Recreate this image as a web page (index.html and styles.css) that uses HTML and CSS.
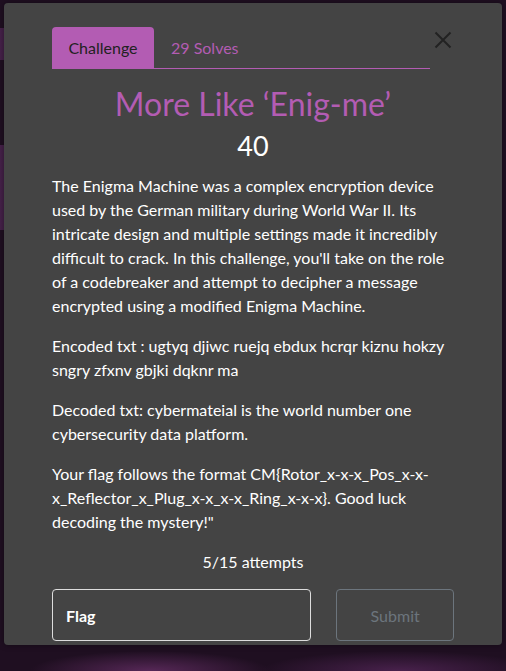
FILE: index.html
```html
<!DOCTYPE html>
<html lang="en">
<head>
<meta charset="utf-8">
<link rel="stylesheet" href="styles.css">
</head>
<body>
<div class="backdrop">
  <div class="modal">
    <div class="modal-head">
      <ul class="tabs">
        <li class="tab active">Challenge</li>
        <li class="tab">29 Solves</li>
      </ul>
      <button class="close" aria-label="Close">
        <svg width="18" height="18" viewBox="0 0 18 18"><path d="M1.5 1.5 L16.5 16.5 M16.5 1.5 L1.5 16.5" stroke="#222" stroke-width="2" fill="none"/></svg>
      </button>
    </div>
    <h2 class="title">More Like ‘Enig-me’</h2>
    <div class="points">40</div>
    <div class="desc">
      <p>The Enigma Machine was a complex encryption device used by the German military during World War II. Its intricate design and multiple settings made it incredibly difficult to crack. In this challenge, you'll take on the role of a codebreaker and attempt to decipher a message encrypted using a modified Enigma Machine.</p>
      <p>Encoded txt : ugtyq djiwc ruejq ebdux hcrqr kiznu hokzy sngry zfxnv gbjki dqknr ma</p>
      <p>Decoded txt: cybermateial is the world number one cybersecurity data platform.</p>
      <p>Your flag follows the format CM{Rotor_x-x-x_Pos_x-x-x_Reflector_x_Plug_x-x_x-x_Ring_x-x-x}. Good luck decoding the mystery!"</p>
    </div>
    <div class="attempts">5/15 attempts</div>
    <form class="flag-form">
      <input class="flag-input" type="text" placeholder="Flag">
      <button class="submit" type="button">Submit</button>
    </form>
  </div>
</div>
</body>
</html>
```
FILE: styles.css
```css
* { box-sizing: border-box; }
html, body { margin: 0; padding: 0; }
body {
  width: 506px;
  height: 671px;
  overflow: hidden;
  font-family: Lato, "Open Sans", sans-serif;
  background:
    linear-gradient(180deg, transparent 0px, transparent 28px, rgba(95,45,100,0.6) 28px, rgba(95,45,100,0.6) 60px, transparent 60px, transparent 145px, rgba(95,45,100,0.6) 145px, rgba(95,45,100,0.6) 230px, transparent 230px) left top / 40px 100% no-repeat,
    radial-gradient(ellipse 120px 20px at 150px 671px, rgba(110,50,110,0.7), transparent),
    radial-gradient(ellipse 140px 20px at 400px 671px, rgba(100,45,105,0.6), transparent),
    #1f0f21;
}
.backdrop {
  padding: 3px 4px 0 4px;
}
.modal {
  background: #444444;
  border-radius: 4px;
  height: 642px;
  padding: 24px 48px 0 48px;
  color: #fff;
  box-shadow: 0 0 6px rgba(0,0,0,0.4);
}
.modal-head {
  display: flex;
  align-items: flex-start;
}
.tabs {
  list-style: none;
  margin: 0;
  padding: 0;
  display: flex;
  width: 378px;
  border-bottom: 1px solid #b35cb3;
}
.tab {
  height: 41px;
  padding: 0 16px 0 17px;
  display: flex;
  align-items: center;
  font-size: 16px;
  color: #b35cb3;
  border-radius: 4px 4px 0 0;
}
.tab.active {
  background: #b35cb3;
  color: #222;
  width: 102px;
  justify-content: center;
  padding: 0;
}
.close {
  background: none;
  border: 0;
  padding: 0;
  margin: 4px 0 0 4px;
  width: 18px;
  height: 18px;
  cursor: pointer;
}
.close svg { display: block; }
.title {
  margin: 15px 0 0;
  text-align: center;
  font-weight: 400;
  font-size: 32px;
  line-height: 40px;
  color: #b35cb3;
}
.points {
  text-align: center;
  font-size: 27px;
  line-height: 34px;
  margin-top: 5px;
  color: #fff;
}
.desc {
  margin-top: 11px;
}
.desc p {
  margin: 0 0 16px;
  font-size: 16px;
  line-height: 24px;
  color: #fff;
}
.attempts {
  text-align: center;
  font-size: 16px;
  line-height: 24px;
  margin-top: 12px;
}
.flag-form {
  display: flex;
  gap: 25px;
  margin-top: 15px;
}
.flag-input {
  width: 260px;
  height: 52px;
  border: 1px solid #ddd;
  border-radius: 4px;
  background: transparent;
  padding: 0 13px;
  font-family: Lato, sans-serif;
  font-size: 16px;
  font-weight: 700;
  color: #fff;
}
.flag-input::placeholder { color: #fff; opacity: 1; }
.submit {
  width: 118px;
  height: 52px;
  border: 1px solid #6c757d;
  border-radius: 4px;
  background: transparent;
  font-family: Lato, sans-serif;
  font-size: 16px;
  color: #6c757d;
}
```
